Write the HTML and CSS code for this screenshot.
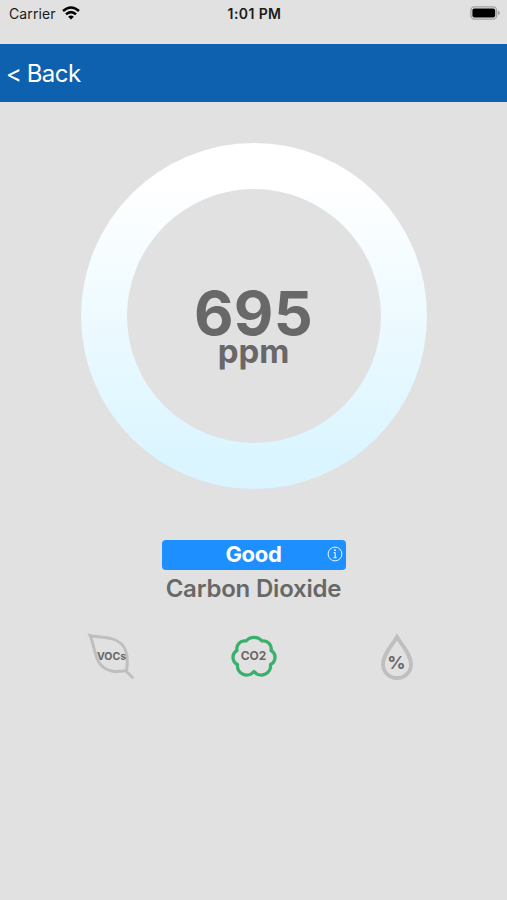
FILE: index.html
```html
<!DOCTYPE html>
<html lang="en">
<head>
  <meta charset="UTF-8">
  <meta name="viewport" content="width=device-width, initial-scale=1.0">
  <title>Carbon Dioxide</title>
  <link rel="stylesheet" href="styles.css">
</head>
<body>
  <div class="status-bar">
    <div class="carrier">
      <span>Carrier</span>
      <svg width="18" height="14" viewBox="0 0 18 14" fill="none" stroke="#000" stroke-width="2.5">
        <path d="M1 5 Q9 -2 17 5" />
        <path d="M4 8.3 Q9 4 14 8.3" />
        <path d="M9 13.6 L6.1 10.7 Q9 8.4 11.9 10.7 Z" fill="#000" stroke="none" />
      </svg>
    </div>
    <div class="time">1:01 PM</div>
    <div class="battery">
      <svg width="30" height="14" viewBox="0 0 30 14">
        <rect x="0.9" y="0.9" width="25.8" height="12.2" rx="3.6" fill="none" stroke="#a2a2a2" stroke-width="1.3" />
        <rect x="2.4" y="2.5" width="22.8" height="9" rx="2" fill="#000" />
        <path d="M28 4.8 Q30 5.5 30 7 Q30 8.5 28 9.2 Z" fill="#a2a2a2" />
      </svg>
    </div>
  </div>

  <header class="nav">
    <a class="back" href="#">&lt; Back</a>
  </header>

  <main>
    <div class="gauge">
      <div class="gauge-inner">
        <div class="value">695</div>
        <div class="unit">ppm</div>
      </div>
    </div>

    <div class="rating">
      <span>Good</span>
      <svg class="info" width="16" height="16" viewBox="0 0 16 16" fill="none" stroke="#fff">
        <circle cx="8" cy="8" r="6.9" stroke-width="0.9" />
        <path d="M6.6 6.6 H8.2 V11.6 M6.5 11.7 H9.7" stroke-width="1" />
        <circle cx="8" cy="4.2" r="0.9" fill="#fff" stroke="none" />
      </svg>
    </div>
    <h1>Carbon Dioxide</h1>

    <div class="sensors">
      <div class="sensor">
        <svg width="50" height="50" viewBox="0 0 50 50" fill="none" stroke="#bfbfbf" stroke-width="3">
          <path d="M4 3.5 C14 6 27 4 35 11.5 C42.5 18.5 42 29 40.5 38.5 C32 40 22 41 14.5 32.5 C8.5 25.5 8.5 13.5 4 3.5 Z" />
          <path d="M39 38 L47.3 46.3" />
        </svg>
        <span class="vocs">VOCs</span>
      </div>
      <div class="sensor active">
        <svg width="50" height="50" viewBox="0 0 50 50" fill="none" stroke="#3bb06c" stroke-width="3.3" stroke-linejoin="round">
          <path d="M17 9 A10.5 10.5 0 0 1 33 9 A7.8 7.8 0 0 1 42 18.5 A7.9 7.9 0 0 1 41.5 32.5 A9.3 9.3 0 0 1 25 39.5 A9.3 9.3 0 0 1 8.5 32.5 A7.9 7.9 0 0 1 8 18.5 A7.8 7.8 0 0 1 17 9 Z" />
        </svg>
        <span class="co2">CO2</span>
      </div>
      <div class="sensor">
        <svg width="50" height="50" viewBox="0 0 50 50" fill="none" stroke="#bfbfbf" stroke-width="3.8">
          <path d="M25 5 C21 12 11 22 11 32.5 A14 13.5 0 0 0 39 32.5 C39 22 29 12 25 5 Z" />
        </svg>
        <span class="humidity">%</span>
      </div>
    </div>
  </main>
</body>
</html>
```

FILE: styles.css
```css
body {
  margin: 0;
  height: 900px;
  background-color: #e1e1e1;
  color: #686868;
  font-family: Inter, "Liberation Sans", sans-serif;
  overflow: hidden;
}
svg {
  display: block;
}
.status-bar {
  display: grid;
  grid-template-columns: 1fr auto 1fr;
  box-sizing: border-box;
  height: 44px;
  padding: 5px 7px 0 9px;
  color: #1a1a1a;
  font-size: 14px;
  line-height: 18px;
}
.carrier {
  display: flex;
  gap: 6px;
}
.carrier span {
  letter-spacing: 0.1px;
}
.carrier svg {
  margin-top: 1px;
}
.time {
  font-size: 14px;
  font-weight: 600;
  letter-spacing: 0.4px;
}
.battery {
  display: flex;
  justify-content: flex-end;
  padding-top: 1px;
}
.nav {
  display: flex;
  align-items: center;
  height: 58px;
  padding-left: 6px;
  background-color: #0d61ae;
}
.back {
  color: white;
  font-size: 24px;
  letter-spacing: -0.5px;
  word-spacing: -1px;
  text-decoration: none;
}
main {
  display: flex;
  flex-direction: column;
  align-items: center;
  padding-top: 41px;
}
.gauge {
  display: flex;
  align-items: center;
  justify-content: center;
  width: 346px;
  height: 346px;
  border-radius: 50%;
  background: linear-gradient(#ffffff 12%, #daf5ff 92%);
}
.gauge-inner {
  box-sizing: border-box;
  width: 254px;
  height: 254px;
  padding-top: 101px;
  border-radius: 50%;
  background-color: #e1e1e1;
  text-align: center;
}
.value {
  font-size: 61px;
  font-weight: 700;
  letter-spacing: 0.3px;
  line-height: 46px;
}
.unit {
  font-size: 33px;
  font-weight: 700;
  line-height: 31px;
}
.rating {
  position: relative;
  width: 184px;
  height: 30px;
  margin-top: 51px;
  border-radius: 4px;
  background-color: #1e8fff;
  color: white;
  font-size: 22px;
  font-weight: 700;
  letter-spacing: -0.3px;
  line-height: 29px;
  text-align: center;
}
.info {
  position: absolute;
  top: 6px;
  right: 3px;
}
h1 {
  margin: 4px 0 0;
  font-size: 24px;
  font-weight: 600;
  letter-spacing: -0.2px;
  line-height: 30px;
}
.sensors {
  display: flex;
  justify-content: space-between;
  width: 336px;
  margin-top: 28px;
}
.sensor {
  position: relative;
  width: 50px;
  height: 50px;
}
.sensor span {
  position: absolute;
  left: 0;
  width: 50px;
  text-align: center;
  font-weight: 700;
}
.sensor .vocs {
  left: 1px;
  top: 18px;
  font-size: 10.5px;
  line-height: 14px;
}
.co2 {
  top: 17px;
  font-size: 12px;
  line-height: 14px;
}
.humidity {
  top: 20px;
  font-size: 18px;
  line-height: 22px;
}
```
